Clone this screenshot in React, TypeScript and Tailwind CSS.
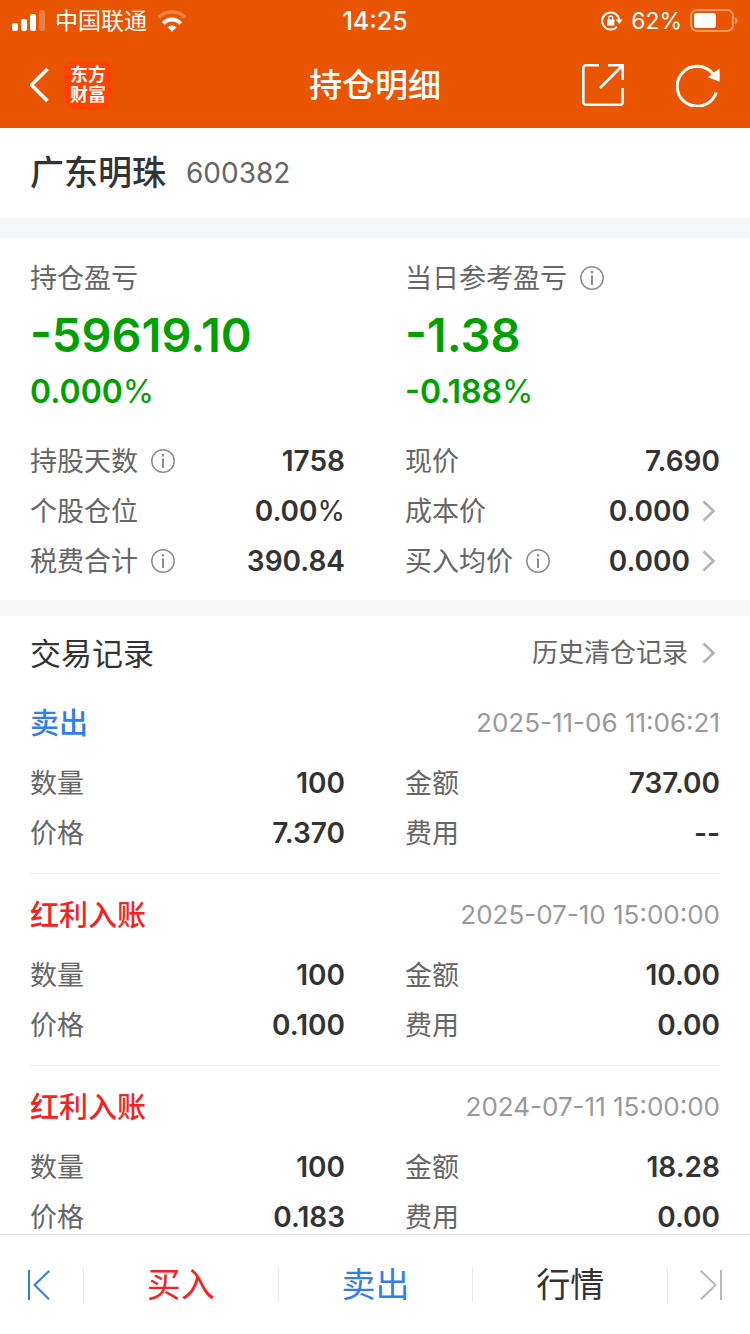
import type { ReactNode } from 'react'

type Field = {
  label: string
  value: string
  info?: boolean
  link?: boolean
}

type TradeRecord = {
  type: string
  color: string
  time: string
  fields: Field[]
}

const summary: Field[] = [
  { label: '持股天数', value: '1758', info: true },
  { label: '现价', value: '7.690' },
  { label: '个股仓位', value: '0.00%' },
  { label: '成本价', value: '0.000', link: true },
  { label: '税费合计', value: '390.84', info: true },
  { label: '买入均价', value: '0.000', info: true, link: true },
]

const records: TradeRecord[] = [
  {
    type: '卖出',
    color: 'text-[#2f7fe6]',
    time: '2025-11-06 11:06:21',
    fields: [
      { label: '数量', value: '100' },
      { label: '金额', value: '737.00' },
      { label: '价格', value: '7.370' },
      { label: '费用', value: '--' },
    ],
  },
  {
    type: '红利入账',
    color: 'text-[#f62222]',
    time: '2025-07-10 15:00:00',
    fields: [
      { label: '数量', value: '100' },
      { label: '金额', value: '10.00' },
      { label: '价格', value: '0.100' },
      { label: '费用', value: '0.00' },
    ],
  },
  {
    type: '红利入账',
    color: 'text-[#f62222]',
    time: '2024-07-11 15:00:00',
    fields: [
      { label: '数量', value: '100' },
      { label: '金额', value: '18.28' },
      { label: '价格', value: '0.183' },
      { label: '费用', value: '0.00' },
    ],
  },
]

function SignalIcon() {
  return (
    <svg width="33" height="22" viewBox="0 0 33 22" fill="#fff" aria-hidden="true">
      <rect x="0" y="13" width="6" height="8" rx="2" />
      <rect x="9" y="9" width="6" height="12" rx="2" />
      <rect x="18" y="4" width="6" height="17" rx="2" />
      <rect x="27" y="0" width="6" height="21" rx="2" opacity="0.25" />
    </svg>
  )
}

function WifiIcon() {
  return (
    <svg width="30" height="24" viewBox="0 0 30 24" fill="none" stroke="#fff" strokeWidth="4" aria-hidden="true">
      <path d="M1.800 8.500A18.200 18.200 0 0 1 28.200 8.500" strokeWidth="3.600" opacity="0.25" />
      <path d="M6.300 14.500A11.500 11.500 0 0 1 23.700 14.500" />
      <path d="M15 22.800L10.600 18.300a6 6 0 0 1 8.800 0z" fill="#fff" stroke="none" />
    </svg>
  )
}

function LockIcon() {
  return (
    <svg width="22" height="20" viewBox="0 0 22 20" fill="none" stroke="#fff" strokeWidth="2" aria-hidden="true">
      <path d="M16 15.600A8.500 8.500 0 1 1 18.100 9" />
      <path d="M14.800 8.600h6.800l-3.400 4.400z" fill="#fff" stroke="none" />
      <rect x="6" y="8.400" width="7.400" height="6" rx="0.800" fill="#fff" stroke="none" />
      <path d="M7.700 9V7a2 2 0 0 1 4 0v2" strokeWidth="1.400" />
    </svg>
  )
}

function BatteryIcon() {
  return (
    <svg width="48" height="24" viewBox="0 0 48 24" fill="none" aria-hidden="true">
      <rect x="1" y="1" width="42" height="21" rx="6" stroke="#fff" strokeWidth="2" opacity="0.4" />
      <rect x="4" y="4" width="22" height="15" rx="3" fill="#fff" />
      <path d="M45 8c3.500 1 3.500 6 0 7z" fill="#fff" opacity="0.4" />
    </svg>
  )
}

function BackIcon() {
  return (
    <svg width="20" height="36" viewBox="0 0 20 36" fill="none" stroke="#fff" strokeWidth="3.600" aria-hidden="true">
      <path d="M17.500 2L1.500 18l16 16" />
    </svg>
  )
}

function ShareIcon() {
  return (
    <svg width="42" height="42" viewBox="0 0 42 42" fill="none" stroke="#fff" strokeWidth="2.600" aria-hidden="true">
      <path d="M17 1.300H4A2.700 2.700 0 0 0 1.300 4v34A2.700 2.700 0 0 0 4 40.700h34a2.700 2.700 0 0 0 2.700-2.700V24" />
      <path d="M26 1.300h14.700V16" />
      <path d="M40 2L18 24" />
    </svg>
  )
}

function RefreshIcon() {
  return (
    <svg width="44" height="44" viewBox="0 0 44 44" fill="none" stroke="#fff" strokeWidth="3" aria-hidden="true">
      <path d="M40.200 29.500A20 20 0 1 1 37 11" />
      <path d="M43.600 5.200V18.800L32 14.200z" fill="#fff" stroke="none" />
    </svg>
  )
}

function InfoButton({ label }: { label: string }) {
  return (
    <button type="button" aria-label={`${label}说明`}>
      <svg width="26" height="26" viewBox="0 0 26 26" fill="none" stroke="#8c8c8c" aria-hidden="true">
        <circle cx="13" cy="13" r="11.200" strokeWidth="1.500" />
        <path d="M13 10.500v9.500" strokeWidth="2" />
        <path d="M13 6v2.400" strokeWidth="2.200" />
      </svg>
    </button>
  )
}

function ChevronIcon() {
  return (
    <svg width="14" height="22" viewBox="0 0 14 22" fill="none" stroke="#b3b3b3" strokeWidth="2.600" aria-hidden="true">
      <path d="M1.500 1.500L11.500 11l-10 9.500" />
    </svg>
  )
}

// The percent sign is drawn lighter than its digits
function Amount({ value }: { value: string }) {
  if (!value.endsWith('%')) return <span>{value}</span>
  return (
    <span>
      {value.slice(0, -1)}
      <span className="font-normal">%</span>
    </span>
  )
}

function FieldRow({ label, value, info, link }: Field) {
  return (
    <div className="flex h-[50px] items-center">
      <dt className="flex items-center gap-3 text-[27px] text-[#666]">
        {label}
        {info && <InfoButton label={label} />}
      </dt>
      <dd className="ml-auto text-[28px] font-semibold">
        {link ? (
          <a href="#detail" className="flex items-center gap-3 pr-1">
            {value}
            <ChevronIcon />
          </a>
        ) : (
          <Amount value={value} />
        )}
      </dd>
    </div>
  )
}

function Profit({ title, amount, percent, info }: { title: string; amount: string; percent: string; info?: boolean }) {
  return (
    <div>
      <h2 className="flex h-10 items-center gap-3 text-[27px] text-[#666]">
        {title}
        {info && <InfoButton label={title} />}
      </h2>
      <p className="flex h-[72px] items-center text-[47px] font-semibold text-[#00a000]">{amount}</p>
      <p className="flex h-11 items-center text-[32px] font-semibold text-[#00a000]">
        <Amount value={percent} />
      </p>
    </div>
  )
}

function TabButton({ children, className }: { children: ReactNode; className: string }) {
  return (
    <button type="button" className={`h-[34px] flex-1 border-r border-[#e8e8e8] text-[34px] leading-none ${className}`}>
      {children}
    </button>
  )
}

export default function App() {
  return (
    <div className="flex h-screen flex-col bg-white font-['Inter','Noto_Sans_CJK_SC',sans-serif] leading-none text-[#333]">
      <header className="flex-none bg-[#ea5504] text-white">
        {/* Status bar */}
        <div className="grid h-[42px] grid-cols-3 items-center px-3 text-[23px]">
          <div className="flex items-center gap-2.5">
            <SignalIcon />
            <span>中国联通</span>
            <WifiIcon />
          </div>
          <div className="text-center text-[25px] font-medium">14:25</div>
          <div className="flex items-center justify-end gap-2">
            <LockIcon />
            <span>62%</span>
            <BatteryIcon />
          </div>
        </div>

        {/* Title bar */}
        <div className="grid h-[86px] grid-cols-3 items-center px-[30px]">
          <div className="flex items-center gap-3.5">
            <button type="button" aria-label="返回">
              <BackIcon />
            </button>
            <div className="flex size-12 flex-col items-center justify-center rounded-[10px] bg-[#ff4400] text-[18px] font-bold">
              <span className="leading-5">东方</span>
              <span className="leading-5">财富</span>
            </div>
          </div>
          <h1 className="text-center text-[33px] font-medium">持仓明细</h1>
          <div className="flex items-center justify-end gap-[52px]">
            <button type="button" aria-label="分享">
              <ShareIcon />
            </button>
            <button type="button" aria-label="刷新">
              <RefreshIcon />
            </button>
          </div>
        </div>
      </header>

      <main className="min-h-0 flex-1 overflow-y-auto [scrollbar-width:none]">
        {/* Stock */}
        <section className="flex h-[90px] items-center gap-5 px-[30px]">
          <h2 className="text-[34px] font-medium">广东明珠</h2>
          <span className="text-[28px] text-[#666]">600382</span>
        </section>

        {/* Summary */}
        <section className="border-t-20 border-[#f6f7f9] px-[30px] pt-5 pb-3.5">
          <div className="mb-[22px] grid grid-cols-2 gap-x-15">
            <Profit title="持仓盈亏" amount="-59619.10" percent="0.000%" />
            <Profit title="当日参考盈亏" amount="-1.38" percent="-0.188%" info />
          </div>
          <dl className="grid grid-cols-2 gap-x-15">
            {summary.map(field => (
              <FieldRow key={field.label} {...field} />
            ))}
          </dl>
        </section>

        {/* Trade records */}
        <section className="border-t-16 border-[#f6f7f9]">
          <div className="flex h-[66px] items-center justify-between px-[30px] pt-2">
            <h2 className="text-[31px]">交易记录</h2>
            <a href="#history" className="flex items-center gap-3.5 pr-1 text-[26px] text-[#666]">
              历史清仓记录
              <ChevronIcon />
            </a>
          </div>
          {records.map(record => (
            <article key={record.time} className="mx-[30px] border-b border-[#ebebeb] pt-4 pb-[15px]">
              <div className="mb-2.5 flex h-[50px] items-center justify-between">
                <h3 className={`text-[29px] font-medium ${record.color}`}>{record.type}</h3>
                <time className="text-[26px] text-[#999]">{record.time}</time>
              </div>
              <dl className="grid grid-cols-2 gap-x-15">
                {record.fields.map(field => (
                  <FieldRow key={field.label} {...field} />
                ))}
              </dl>
            </article>
          ))}
        </section>
      </main>

      {/* Bottom bar */}
      <nav className="flex h-[100px] flex-none items-center border-t border-[#e8e8e8] bg-white">
        <button type="button" aria-label="上一只" className="flex h-[34px] w-21 items-center border-r border-[#e8e8e8] pl-7">
          <svg width="24" height="30" viewBox="0 0 24 30" fill="none" stroke="#2f7fe6" strokeWidth="2" aria-hidden="true">
            <path d="M1 0v30" />
            <path d="M21.300 0.800L6.500 15l14.500 14.200" />
          </svg>
        </button>
        <TabButton className="text-[#f62222]">买入</TabButton>
        <TabButton className="text-[#2f7fe6]">卖出</TabButton>
        <TabButton className="text-[#333]">行情</TabButton>
        <button type="button" aria-label="下一只" className="flex h-[34px] w-[82px] items-center justify-end pr-7">
          <svg width="24" height="30" viewBox="0 0 24 30" fill="none" stroke="#b8b8b8" strokeWidth="2" aria-hidden="true">
            <path d="M23 0v30" />
            <path d="M2.700 0.800L17.500 15L3 29.200" />
          </svg>
        </button>
      </nav>
    </div>
  )
}
